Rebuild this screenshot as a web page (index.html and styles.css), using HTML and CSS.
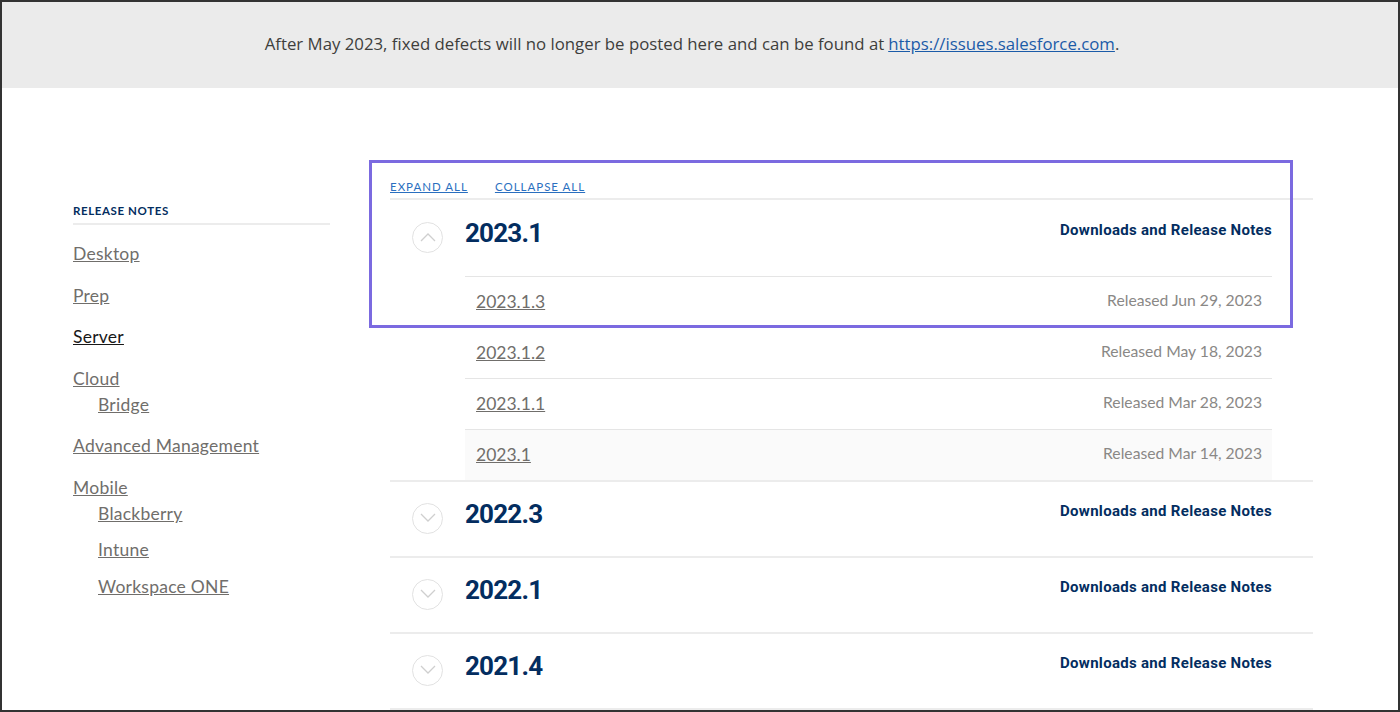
FILE: index.html
```html
<!DOCTYPE html>
<html lang="en">
<head>
    <meta charset="UTF-8">
    <meta name="viewport" content="width=device-width, initial-scale=1.0">
    <title>Server Release Notes</title>
    <link rel="stylesheet" href="styles.css">
</head>
<body>
<div class="frame">
    <div class="banner">
        After May 2023, fixed defects will no longer be posted here and can be found at <a href="#">https://issues.salesforce.com</a>.
    </div>

    <div class="page">
        <nav class="sidebar">
            <div class="sidebar-title">RELEASE NOTES</div>
            <ul class="nav">
                <li><a href="#">Desktop</a></li>
                <li><a href="#">Prep</a></li>
                <li><a href="#" class="active">Server</a></li>
                <li><a href="#">Cloud</a>
                    <ul class="subnav">
                        <li><a href="#">Bridge</a></li>
                    </ul>
                </li>
                <li><a href="#">Advanced Management</a></li>
                <li><a href="#">Mobile</a>
                    <ul class="subnav">
                        <li><a href="#">Blackberry</a></li>
                        <li><a href="#">Intune</a></li>
                        <li><a href="#">Workspace ONE</a></li>
                    </ul>
                </li>
            </ul>
        </nav>

        <main class="main">
            <div class="highlight"></div>
            <div class="toolbar">
                <a href="#">EXPAND ALL</a>
                <a href="#">COLLAPSE ALL</a>
            </div>

            <section class="release open">
                <div class="release-head">
                    <span class="toggle">
                        <svg width="16" height="10" viewBox="0 0 16 10"><path d="M1 9 L8 2 L15 9" fill="none" stroke="#cfcfcf" stroke-width="1.3"/></svg>
                    </span>
                    <h2>2023.1</h2>
                    <a href="#" class="downloads">Downloads and Release Notes</a>
                </div>
                <ul class="versions">
                    <li><a href="#">2023.1.3</a><span>Released Jun 29, 2023</span></li>
                    <li><a href="#">2023.1.2</a><span>Released May 18, 2023</span></li>
                    <li><a href="#">2023.1.1</a><span>Released Mar 28, 2023</span></li>
                    <li class="shaded"><a href="#">2023.1</a><span>Released Mar 14, 2023</span></li>
                </ul>
            </section>

            <section class="release">
                <div class="release-head">
                    <span class="toggle">
                        <svg width="16" height="10" viewBox="0 0 16 10"><path d="M1 1 L8 8 L15 1" fill="none" stroke="#cfcfcf" stroke-width="1.3"/></svg>
                    </span>
                    <h2>2022.3</h2>
                    <a href="#" class="downloads">Downloads and Release Notes</a>
                </div>
            </section>

            <section class="release">
                <div class="release-head">
                    <span class="toggle">
                        <svg width="16" height="10" viewBox="0 0 16 10"><path d="M1 1 L8 8 L15 1" fill="none" stroke="#cfcfcf" stroke-width="1.3"/></svg>
                    </span>
                    <h2>2022.1</h2>
                    <a href="#" class="downloads">Downloads and Release Notes</a>
                </div>
            </section>

            <section class="release">
                <div class="release-head">
                    <span class="toggle">
                        <svg width="16" height="10" viewBox="0 0 16 10"><path d="M1 1 L8 8 L15 1" fill="none" stroke="#cfcfcf" stroke-width="1.3"/></svg>
                    </span>
                    <h2>2021.4</h2>
                    <a href="#" class="downloads">Downloads and Release Notes</a>
                </div>
            </section>
        </main>
    </div>
</div>
</body>
</html>
```

FILE: styles.css
```css
* {
    box-sizing: border-box;
}

body {
    margin: 0;
    padding: 0;
    background-color: #fff;
    font-family: 'Lato', 'Open Sans', sans-serif;
    color: #333;
}

.frame {
    height: 712px;
    border: 2px solid #333;
    overflow: hidden;
}

.banner {
    height: 86px;
    background-color: #ebebeb;
    display: flex;
    align-items: center;
    justify-content: center;
    font-family: 'Open Sans', sans-serif;
    font-size: 16.8px;
    color: #3e3e3c;
    padding: 0 16px 4px 0;
}

.banner a {
    color: #1b5ba8;
    margin-left: 4px;
}

.page {
    display: flex;
    gap: 60px;
    padding: 0 85px 0 71px;
}

/* sidebar */
.sidebar {
    width: 257px;
    flex-shrink: 0;
    margin-top: 116px;
}

.sidebar-title {
    font-size: 11.5px;
    font-weight: 700;
    letter-spacing: 0.6px;
    color: #032d60;
    padding-bottom: 6px;
    border-bottom: 2px solid #ececec;
}

.nav,
.subnav {
    list-style: none;
    margin: 0;
    padding: 0;
}

.nav > li {
    margin-top: 15.6px;
}

.nav > li:first-child {
    margin-top: 16px;
}

.nav a {
    font-size: 17.5px;
    line-height: 26px;
    letter-spacing: 0.25px;
    color: #706e6b;
    text-decoration: underline;
}

.nav a.active {
    color: #181818;
}

.subnav {
    padding-left: 25px;
}

.subnav li + li {
    margin-top: 10.5px;
}

/* main column */
.main {
    flex: 1;
    position: relative;
    margin-top: 89px;
}

.highlight {
    position: absolute;
    left: -21px;
    top: -17px;
    width: 924px;
    height: 168px;
    border: 3px solid #7b6ae0;
    pointer-events: none;
}

.toolbar {
    display: flex;
    gap: 27px;
    height: 23px;
    border-bottom: 2px solid #ececec;
}

.toolbar a {
    font-family: 'Lato', sans-serif;
    font-size: 11.5px;
    letter-spacing: 1px;
    color: #2a6fbf;
    text-decoration: underline;
    line-height: 20px;
}

.release {
    border-bottom: 2px solid #ececec;
}

.release-head {
    height: 76px;
    display: flex;
    align-items: center;
    padding: 0 41px 10px 22px;
}

.release:not(.open) .release-head {
    height: 74px;
}

.toggle {
    width: 31px;
    height: 31px;
    border: 1.5px solid #e2e2e2;
    border-radius: 50%;
    display: flex;
    align-items: center;
    justify-content: center;
    margin-top: 8px;
    margin-right: 22px;
}

.release-head h2 {
    margin: 0;
    flex: 1;
    font-family: 'Roboto', sans-serif;
    font-weight: 700;
    font-size: 26px;
    letter-spacing: -0.8px;
    color: #032d60;
}

.downloads {
    font-family: 'Roboto', sans-serif;
    font-size: 15px;
    font-weight: 700;
    letter-spacing: 0.3px;
    color: #032d60;
    text-decoration: none;
    margin-bottom: 6px;
}

.versions {
    list-style: none;
    margin: 0 41px 0 75px;
    padding: 0;
}

.versions li {
    height: 51px;
    border-top: 1px solid #e5e5e5;
    display: flex;
    align-items: center;
    justify-content: space-between;
    padding: 0 10px 5px 11px;
}

.versions li.shaded {
    background-color: #fafafa;
}

.versions a {
    font-family: 'Lato', sans-serif;
    font-size: 17.5px;
    color: #706e6b;
    text-decoration: underline;
    margin-top: 4px;
}

.versions span {
    font-family: 'Lato', sans-serif;
    font-size: 15.7px;
    color: #8a8886;
}
```
